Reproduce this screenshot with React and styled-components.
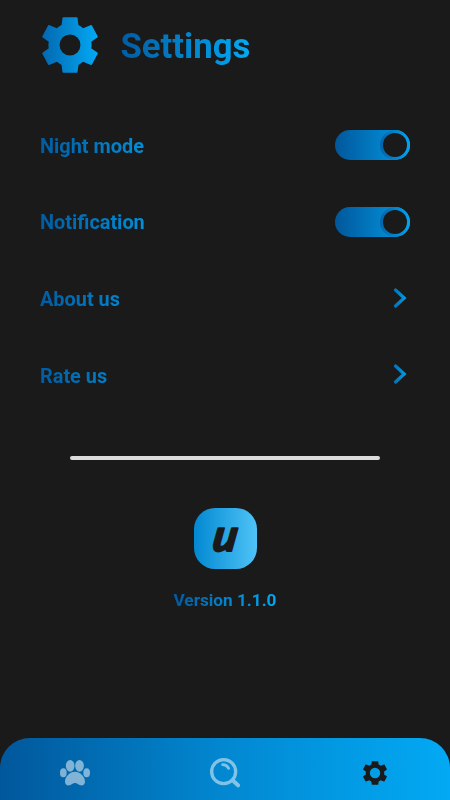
import React, {useState} from 'react'
import styled, {createGlobalStyle} from 'styled-components'

const GlobalStyle = createGlobalStyle`
  body {
    margin: 0;
    background-color: #1a1a1a;
    font-family: Roboto, "Liberation Sans", sans-serif;
  }
`

const Screen = styled.div`
  display: flex;
  flex-direction: column;
  width: 450px;
  height: 800px;
  overflow: hidden;
  background-color: #1a1a1a;
`

const Header = styled.header`
  display: flex;
  align-items: center;
  gap: 22.5px;
  height: 89px;
  padding-left: 42px;
  box-sizing: border-box;
`

const GradientText = styled.span`
  color: transparent;
  background-image: linear-gradient(90deg, #015ca3, #03a9f4);
  background-clip: text;
  -webkit-background-clip: text;
  font-weight: 700;
`

const Title = styled(GradientText)`
  font-size: 34.7px;
  line-height: 46px;
  padding-top: 3px;
`

const SettingsList = styled.main`
  display: flex;
  flex-direction: column;
  padding: 18px 40px 0;
`

const Row = styled.div`
  display: flex;
  align-items: center;
  justify-content: space-between;
  height: 76.7px;
`

const Label = styled(GradientText)`
  width: 160px;
  padding-top: 2.5px;
  font-size: 19.9px;
  line-height: 28px;
`

const Switch = styled.button`
  display: flex;
  justify-content: ${props => props.$on ? 'flex-end' : 'flex-start'};
  width: 75px;
  height: 30px;
  padding: 0;
  border: none;
  border-radius: 15px;
  background: linear-gradient(90deg, #01579b, #039be5);
`

const Knob = styled.span`
  display: flex;
  align-items: center;
  justify-content: center;
  width: 30px;
  height: 30px;
  border-radius: 50%;
  background: linear-gradient(90deg, #0262aa, #03a5f0);

  &::after {
    content: '';
    width: 24px;
    height: 24px;
    border-radius: 50%;
    background-color: #1a1a1a;
  }
`

const Divider = styled.hr`
  width: 310px;
  height: 4px;
  margin: 42px auto 0;
  border: none;
  border-radius: 2px;
  background-color: #dcdcdc;
`

const About = styled.section`
  display: flex;
  flex: 1;
  flex-direction: column;
  align-items: center;
  padding-top: 48px;
`

const Logo = styled.div`
  width: 63px;
  height: 61px;
  border-radius: 21px;
  background: linear-gradient(90deg, #0288d1, #4fc3f7);

  svg {
    display: block;
    overflow: visible;
  }
`

const LogoLetter = styled.text`
  fill: #1a1a1a;
  stroke: #1a1a1a;
  stroke-width: 2.2px;
  stroke-linejoin: round;
  font-family: Lato, "Liberation Sans", sans-serif;
  font-size: 44px;
  font-style: italic;
  font-weight: 700;
  text-anchor: middle;
`

const Version = styled(GradientText)`
  margin-top: 19.5px;
  font-size: 17.2px;
  line-height: 24px;
`

const NavBar = styled.nav`
  display: grid;
  grid-template-columns: repeat(3, 1fr);
  height: 62px;
  border-radius: 30px 30px 0 0;
  background: linear-gradient(90deg, #01579b, #0288d1 50%, #03a9f4);
`

const NavItem = styled.button`
  display: flex;
  align-items: center;
  justify-content: center;
  padding: 7px 0 0;
  border: none;
  background: none;
  color: ${props => props.$active ? '#1a1a1a' : '#fff'};

  svg {
    opacity: ${props => props.$active ? 1 : 0.5};
  }
`

const Gear = ({size, fill, hole}) => (
    <svg width={size} height={size} viewBox="37 36 166 166">
        <defs>
            <linearGradient id="gearFill" x1="0" x2="1">
                <stop offset="0" stopColor="#0268b0"/>
                <stop offset="1" stopColor="#03a9f4"/>
            </linearGradient>
            <mask id={`hole${hole}`}>
                <rect x="37" y="36" width="166" height="166" fill="white"/>
                <circle cx="120" cy="119" r={hole} fill="black"/>
            </mask>
        </defs>
        <path
            d="M100 37H140Q142 37 142.300 39L145 60Q153 64 159 69L182 60Q184 59 185 61L202 93Q203 95 201 97L183 109Q185 119 183 129L201 141Q203 143 202 145L185 177Q184 179 182 178L159 169Q153 174 145 178L142.300 199Q142 201 140 201H100Q98 201 97.700 199L95 178Q87 174 81 169L58 178Q56 179 55 177L38 145Q37 143 39 141L57 129Q55 119 57 109L39 97Q37 95 38 93L55 61Q56 59 58 60L81 69Q87 64 95 60L97.700 39Q98 37 100 37Z"
            fill={fill}
            mask={`url(#hole${hole})`}
        />
    </svg>
)

const Chevron = () => (
    <svg width="20" height="24" viewBox="0 1 20 24">
        <defs>
            <linearGradient id="chevronStroke" x1="0" x2="1">
                <stop offset="0" stopColor="#0277bd"/>
                <stop offset="1" stopColor="#0394df"/>
            </linearGradient>
        </defs>
        <path d="M5.500 4L14.200 12L5.500 20" fill="none" stroke="url(#chevronStroke)" strokeWidth="3.200" strokeLinecap="round"/>
    </svg>
)

const Paw = () => (
    <svg width="30" height="26" viewBox="0 0 90 78" fill="currentColor">
        <ellipse cx="10" cy="38" rx="10" ry="13.500"/>
        <ellipse cx="30.500" cy="17.500" rx="13" ry="17.500"/>
        <ellipse cx="58.500" cy="17.500" rx="13" ry="17.500"/>
        <ellipse cx="80" cy="38" rx="10" ry="13.500"/>
        <path d="M45 35C27 35 15 52 15 65C15 73 21 77 28 76C35 75 38 69 45 69S55 75 62 76C69 77 75 73 75 65C75 52 63 35 45 35Z"/>
    </svg>
)

const Search = () => (
    <svg width="30" height="30" viewBox="0 0 90 90" fill="none" stroke="currentColor" strokeLinecap="round">
        <path d="M68 67L84 82" strokeWidth="12"/>
        <circle cx="41" cy="41" r="36" strokeWidth="10"/>
        <path d="M38 20Q50 20 56 31" strokeWidth="8.500"/>
    </svg>
)

const Toggle = () => {
    const [on, setOn] = useState(true)

    return (
        <Switch $on={on} onClick={() => setOn(!on)}>
            <Knob/>
        </Switch>
    )
}

const App = () => {
    return (
        <>
            <GlobalStyle/>
            <Screen>
                <Header>
                    <Gear size={56} fill="url(#gearFill)" hole={31}/>
                    <Title>Settings</Title>
                </Header>
                <SettingsList>
                    <Row>
                        <Label>Night mode</Label>
                        <Toggle/>
                    </Row>
                    <Row>
                        <Label>Notification</Label>
                        <Toggle/>
                    </Row>
                    <Row>
                        <Label>About us</Label>
                        <Chevron/>
                    </Row>
                    <Row>
                        <Label>Rate us</Label>
                        <Chevron/>
                    </Row>
                </SettingsList>
                <Divider/>
                <About>
                    <Logo>
                        <svg width="63" height="61" viewBox="0 0 63 61">
                            <LogoLetter transform="translate(29.500 43) skewX(-9)">u</LogoLetter>
                        </svg>
                    </Logo>
                    <Version>Version 1.1.0</Version>
                </About>
                <NavBar>
                    <NavItem><Paw/></NavItem>
                    <NavItem><Search/></NavItem>
                    <NavItem $active><Gear size={24} fill="currentColor" hole={36}/></NavItem>
                </NavBar>
            </Screen>
        </>
    )
}

export default App
